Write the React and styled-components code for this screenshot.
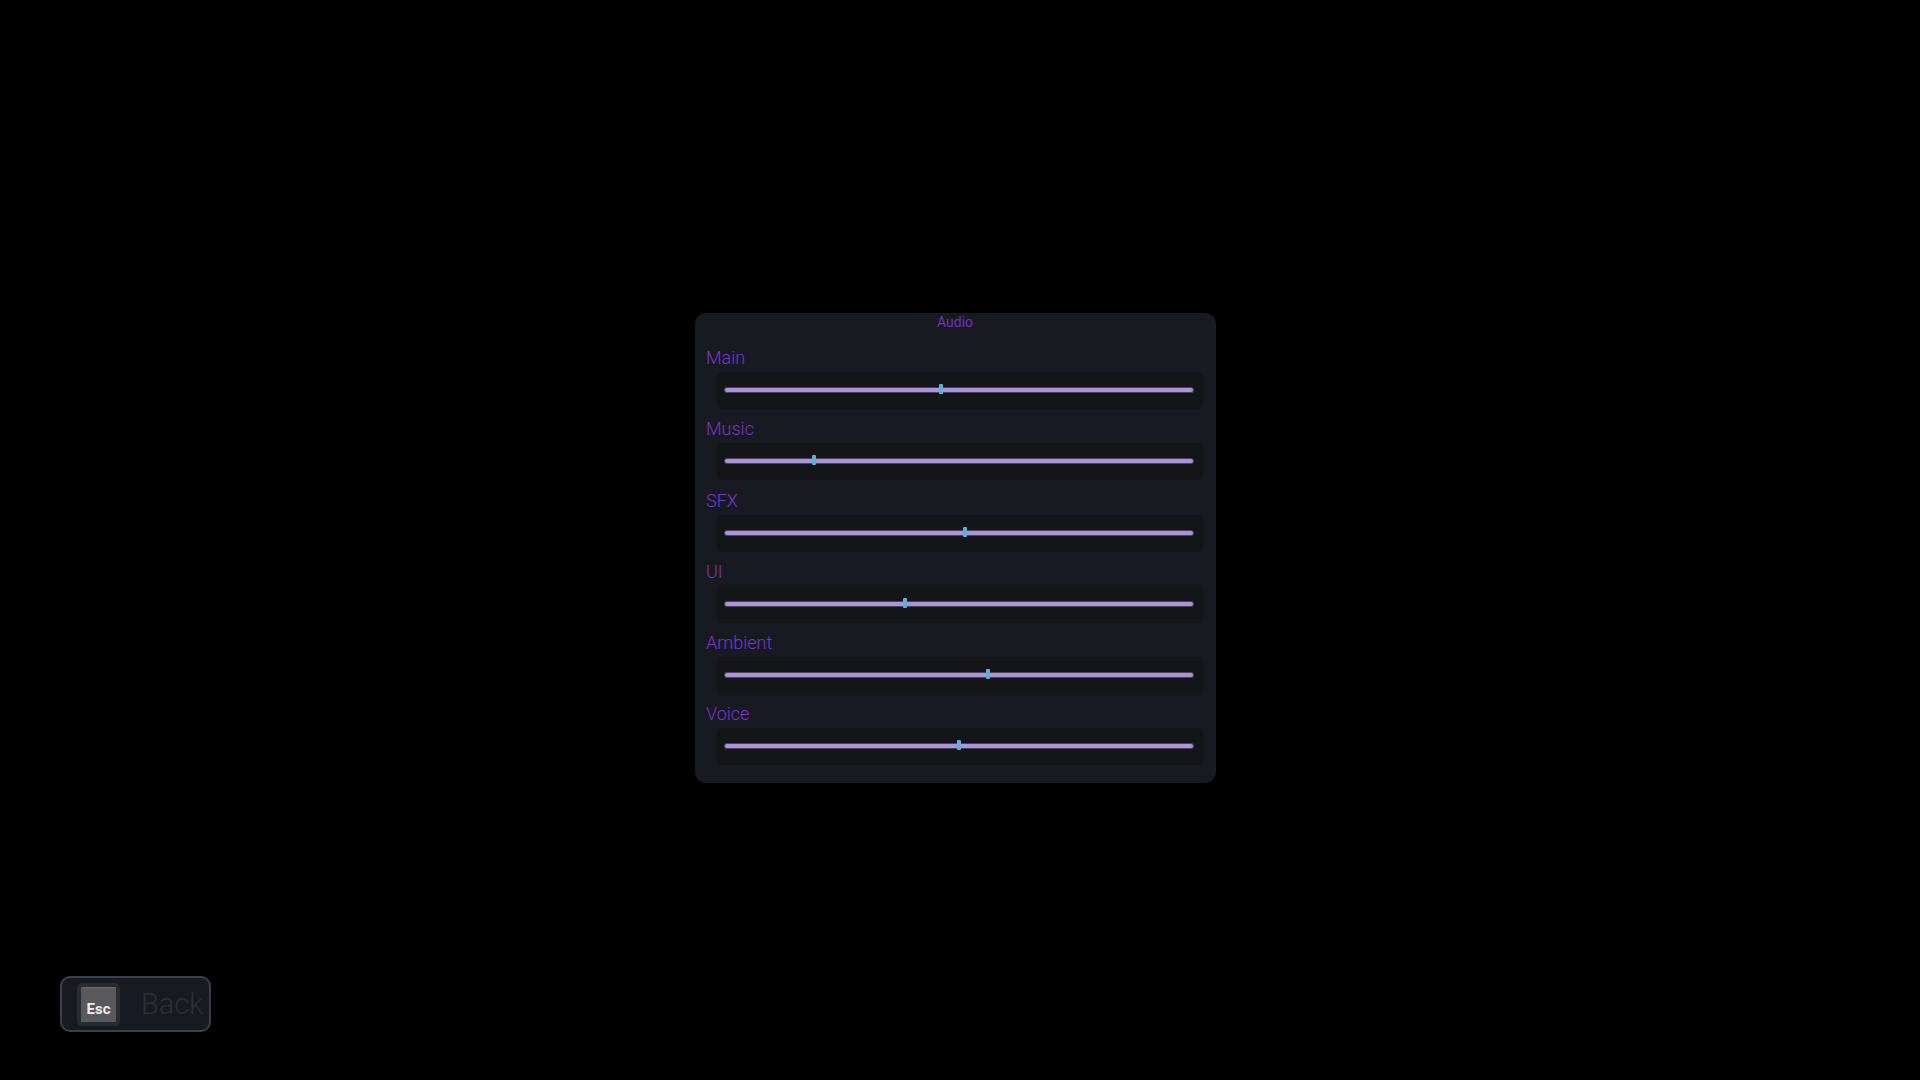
import React from 'react';
import styled, { createGlobalStyle } from 'styled-components';

const Global = createGlobalStyle`
  html, body {
    margin: 0;
    padding: 0;
    background: #000;
    font-family: Roboto, "Liberation Sans", sans-serif;
  }
`

const Screen = styled.div`
  width: 100vw;
  height: 100vh;
  display: flex;
  flex-direction: column;
  overflow: hidden;
`

const Panel = styled.section`
  width: 521px;
  box-sizing: border-box;
  margin: 313px 0 0 695px;
  padding: 0 12px 18px 11px;
  background: #181a21;
  border-radius: 11px;
  display: flex;
  flex-direction: column;
`

const Title = styled.h2`
  margin: 0 0 16px;
  font-size: 14px;
  line-height: 18px;
  font-weight: 400;
  color: #6f30c4;
  text-align: center;
`

const List = styled.div`
  display: flex;
  flex-direction: column;
  gap: 9.3px;
`

const Row = styled.div`
  display: flex;
  flex-direction: column;
  gap: 3px;
`

const Label = styled.label`
  font-size: 18px;
  line-height: 22px;
  font-weight: 300;
  color: #7a36cc;
`

const SliderBox = styled.div`
  box-sizing: border-box;
  margin-left: 10px;
  height: 37px;
  background: #141518;
  border-radius: 8px;
  display: flex;
  align-items: center;
  padding: 0 10px 1px 8px;
`

const Track = styled.div`
  position: relative;
  flex: 1;
  height: 4px;
  background: #ad93dc;
  border: 1px solid #4a4556;
  border-radius: 3px;
`

const Thumb = styled.div`
  position: absolute;
  top: -4px;
  width: 4px;
  height: 10px;
  margin-left: -2px;
  background: #5bb0d6;
  border-radius: 1px;
`

const Footer = styled.div`
  margin-top: auto;
  padding: 0 0 48px 60px;
`

const BackButton = styled.button`
  display: flex;
  align-items: center;
  gap: 21px;
  box-sizing: border-box;
  width: 151px;
  height: 56px;
  padding: 0 0 0 15px;
  background: #181a21;
  border: 2px solid #3a3f4a;
  border-radius: 10px;
  font-family: inherit;
  cursor: pointer;
`

const Key = styled.span`
  flex-shrink: 0;
  box-sizing: border-box;
  width: 43px;
  height: 43px;
  border: 4px solid #2a2b2e;
  border-radius: 5px;
  background: #59595b;
  box-shadow: inset 0 1px 0 #6a6a6c;
  color: #ececec;
  font-size: 15px;
  font-weight: 700;
  display: flex;
  align-items: flex-end;
  justify-content: center;
  padding-bottom: 4px;
`

const BackText = styled.span`
  font-size: 29px;
  line-height: 1;
  font-weight: 300;
  color: #2c2f37;
`

const channels = [
  { name: 'Main', value: 0.461 },
  { name: 'Music', value: 0.19 },
  { name: 'SFX', value: 0.513 },
  { name: 'UI', value: 0.385 },
  { name: 'Ambient', value: 0.5625 },
  { name: 'Voice', value: 0.5 },
]

const App = () => {
  return (
    <Screen>
      <Global />
      <Panel>
        <Title>Audio</Title>
        <List>
          {channels.map(c => (
            <Row key={c.name}>
              <Label>{c.name}</Label>
              <SliderBox>
                <Track>
                  <Thumb style={{ left: `${c.value * 100}%` }} />
                </Track>
              </SliderBox>
            </Row>
          ))}
        </List>
      </Panel>
      <Footer>
        <BackButton>
          <Key>Esc</Key>
          <BackText>Back</BackText>
        </BackButton>
      </Footer>
    </Screen>
  )
}

export default App
